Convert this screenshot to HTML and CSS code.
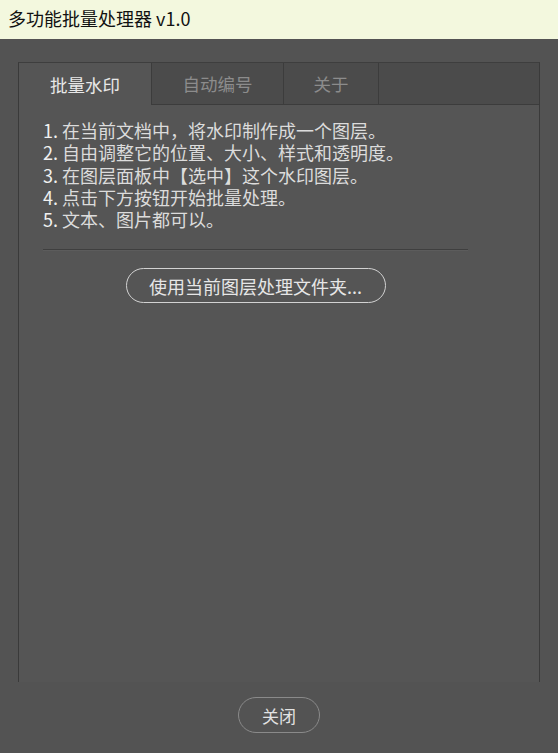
FILE: index.html
```html
<!DOCTYPE html>
<html lang="zh-CN">
<head>
  <meta charset="UTF-8">
  <meta name="viewport" content="width=device-width, initial-scale=1.0">
  <title>多功能批量处理器 v1.0</title>
  <link rel="stylesheet" href="styles.css">
</head>
<body>
  <div class="titlebar">多功能批量处理器 v1.0</div>

  <div class="main">
    <div class="panel">
      <div class="tabs">
        <div class="tab active">批量水印</div>
        <div class="tab">自动编号</div>
        <div class="tab tab-small">关于</div>
        <div class="tab tab-rest"></div>
      </div>

      <div class="content">
        <ol class="steps">
          <li><span class="num">1.</span> 在当前文档中，将水印制作成一个图层。</li>
          <li><span class="num">2.</span> 自由调整它的位置、大小、样式和透明度。</li>
          <li><span class="num">3.</span> 在图层面板中【选中】这个水印图层。</li>
          <li><span class="num">4.</span> 点击下方按钮开始批量处理。</li>
          <li><span class="num">5.</span> 文本、图片都可以。</li>
        </ol>

        <div class="sep"></div>

        <div class="action">
          <button class="pill-btn">使用当前图层处理文件夹...</button>
        </div>
      </div>
    </div>

    <div class="footer">
      <button class="close-btn">关闭</button>
    </div>
  </div>
</body>
</html>
```

FILE: styles.css
```css
body {
  margin: 0;
  padding: 0;
  background-color: #535353;
  font-family: "Noto Sans CJK SC", "Liberation Sans", sans-serif;
  color: #e4e4e4;
}

/* Title Bar */
.titlebar {
  height: 39px;
  box-sizing: border-box;
  padding: 0 8px 4px;
  display: flex;
  align-items: center;
  background-color: #f3f8de;
  color: #111;
  font-size: 18px;
}

.main {
  padding: 23px 18px 0;
}

/* Panel */
.panel {
  height: 620px;
  box-sizing: border-box;
  background-color: #555;
  border-top: 1px solid #3e3e3e;
  border-left: 1px solid #3a3a3a;
  border-right: 1px solid #3a3a3a;
}

/* Tabs */
.tabs {
  display: flex;
  height: 42px;
}

.tab {
  width: 132px;
  box-sizing: border-box;
  display: flex;
  align-items: center;
  justify-content: center;
  background-color: #4b4b4b;
  border-left: 1px solid #3c3c3c;
  border-bottom: 1px solid #3c3c3c;
  color: #8c8c8c;
  font-size: 17.5px;
}

.tab.active {
  background-color: #555;
  border: none;
  color: #e8e8e8;
}

.tab-small {
  width: 95px;
}

.tab-rest {
  flex: 1;
}

/* Content */
.content {
  padding: 14px 0 0 24px;
}

.steps {
  list-style: none;
  margin: 0;
  padding: 0;
  font-size: 18px;
  line-height: 22.25px;
  color: #dcdcdc;
}

.steps li {
  height: 22.25px;
}

.num {
  color: #f0f0f0;
}

.sep {
  width: 425px;
  margin-top: 19px;
  border-top: 1px solid #3f3f3f;
  border-bottom: 1px solid #5c5c5c;
}

.action {
  width: 425px;
  margin-top: 17px;
  text-align: center;
}

.pill-btn {
  width: 260px;
  height: 35px;
  padding: 0;
  background: transparent;
  border: 1.5px solid #d2d2d2;
  border-radius: 18px;
  color: #e6e6e6;
  font-family: inherit;
  font-size: 18px;
}

/* Footer */
.footer {
  margin-top: 15px;
  text-align: center;
}

.close-btn {
  width: 82px;
  height: 36px;
  padding: 0;
  background: transparent;
  border: 1px solid #8a8a8a;
  border-radius: 18px;
  color: #e2e2e2;
  font-family: inherit;
  font-size: 17px;
}
```
